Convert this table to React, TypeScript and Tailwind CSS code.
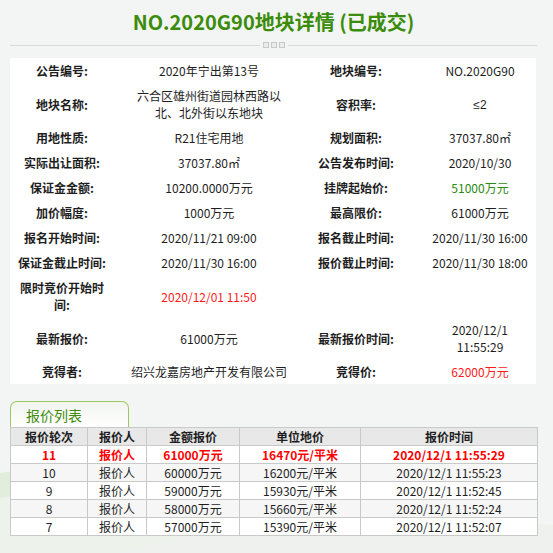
import React from 'react';

type Cell = { text: string; color?: string };
type InfoRow = [string, Cell, string, Cell];

const v = (text: string, color?: string): Cell => ({ text, color });

const info: InfoRow[] = [
  ['公告编号:', v('2020年宁出第13号'), '地块编号:', v('NO.2020G90')],
  ['地块名称:', v('六合区雄州街道园林西路以北、北外街以东地块'), '容积率:', v('≤2')],
  ['用地性质:', v('R21住宅用地'), '规划面积:', v('37037.80㎡')],
  ['实际出让面积:', v('37037.80㎡'), '公告发布时间:', v('2020/10/30')],
  ['保证金金额:', v('10200.0000万元'), '挂牌起始价:', v('51000万元', 'text-[#2b8a12]')],
  ['加价幅度:', v('1000万元'), '最高限价:', v('61000万元')],
  ['报名开始时间:', v('2020/11/21 09:00'), '报名截止时间:', v('2020/11/30 16:00')],
  ['保证金截止时间:', v('2020/11/30 16:00'), '报价截止时间:', v('2020/11/30 18:00')],
  ['限时竞价开始时间:', v('2020/12/01 11:50', 'text-[#ff1a1a]'), '', v('')],
  ['最新报价:', v('61000万元'), '最新报价时间:', v('2020/12/1 11:55:29')],
  ['竞得者:', v('绍兴龙嘉房地产开发有限公司'), '竞得价:', v('62000万元', 'text-[#ff1a1a]')],
];

const bids = [
  { round: '11', price: '61000万元', unit: '16470元/平米', time: '2020/12/1 11:55:29' },
  { round: '10', price: '60000万元', unit: '16200元/平米', time: '2020/12/1 11:55:23' },
  { round: '9', price: '59000万元', unit: '15930元/平米', time: '2020/12/1 11:52:45' },
  { round: '8', price: '58000万元', unit: '15660元/平米', time: '2020/12/1 11:52:24' },
  { round: '7', price: '57000万元', unit: '15390元/平米', time: '2020/12/1 11:52:07' },
];

const headers = ['报价轮次', '报价人', '金额报价', '单位地价', '报价时间'];

const App = () => {
  return (
    <div className="relative min-h-[553px] overflow-hidden bg-[#f3f5f4] font-['Noto_Sans_CJK_SC',sans-serif] text-[12px] text-[#1e1e1e]">
      {/* background swoosh */}
      <svg className="absolute bottom-0 left-0" width="553" height="90" viewBox="0 0 553 90">
        <path d="M0 10 C60 0 130 10 200 40 C260 65 330 80 420 90 L0 90 Z" fill="#e2eddb" />
        <path d="M0 35 C70 25 150 45 230 70 C270 82 300 88 330 90 L0 90 Z" fill="#edf3ea" />
        <path d="M120 90 C220 60 340 50 553 62 L553 90 Z" fill="#eef1ee" />
      </svg>

      <div className="relative ml-[10px] w-[527px]">
        <h1 className="pt-[8px] text-center text-[20px] font-bold leading-[28px] text-[#3b8c0b]">
          NO.2020G90地块详情 (已成交)
        </h1>

        {/* divider */}
        <div className="mt-[6px] flex h-[6px] items-center">
          <div className="h-px flex-1 bg-[#d8dad8]" />
          <div className="mx-[3px] flex gap-[2px]">
            <span className="h-[6px] w-[6px] border border-[#c8c8c8] bg-[#ececec]" />
            <span className="h-[6px] w-[6px] border border-[#c8c8c8] bg-[#ececec]" />
            <span className="h-[6px] w-[6px] border border-[#c8c8c8] bg-[#ececec]" />
          </div>
          <div className="h-px flex-1 bg-[#d8dad8]" />
        </div>

        {/* detail panel */}
        <div className="mt-[10px] w-[526px] bg-white">
          <table className="w-full table-fixed border-collapse leading-[17px]">
            <colgroup>
              <col className="w-[104px]" />
              <col className="w-[190px]" />
              <col className="w-[104px]" />
              <col className="w-[128px]" />
            </colgroup>
            <tbody>
              {info.map((row, i) => (
                <tr key={i}>
                  <td className="px-[7px] py-[4px] text-center font-bold">{row[0]}</td>
                  <td className={`px-[14px] py-[4px] text-center ${row[1].color ?? ''}`}>{row[1].text}</td>
                  <td className="px-[7px] py-[4px] text-center font-bold">{row[2]}</td>
                  <td className={`pl-[20px] pr-[4px] py-[4px] text-center ${row[3].color ?? ''}`}>
                    {row[3].text === '≤2' ? <span className="font-['Liberation_Sans',sans-serif]">≤2</span> : row[3].text}
                  </td>
                </tr>
              ))}
            </tbody>
          </table>
        </div>

        {/* bid list tab */}
        <div className="mt-[17px] flex h-[26px] w-[119px] items-center rounded-t-[7px] border border-b-0 border-[#9cc95f] bg-gradient-to-b from-[#f1f4ef] to-white pl-[15px] text-[14px] leading-[20px] text-[#3f8c0e]">
          报价列表
        </div>

        <table className="w-[527px] table-fixed border-collapse text-center leading-[17px]">
          <colgroup>
            <col className="w-[77px]" />
            <col className="w-[59px]" />
            <col className="w-[93px]" />
            <col className="w-[121px]" />
            <col className="w-[177px]" />
          </colgroup>
          <thead>
            <tr className="bg-[#e8e8e8]">
              {headers.map((h) => (
                <th key={h} className="border border-[#c9c9c9] font-bold">
                  {h}
                </th>
              ))}
            </tr>
          </thead>
          <tbody>
            {bids.map((b, i) => (
              <tr
                key={b.round}
                className={`${i === 0 ? 'font-bold text-[#ff0000]' : ''} ${i % 2 === 1 ? 'bg-[#f6f6f6]' : 'bg-white'}`}
              >
                <td className="border border-[#c9c9c9]">{b.round}</td>
                <td className="border border-[#c9c9c9]">报价人</td>
                <td className="border border-[#c9c9c9]">{b.price}</td>
                <td className="border border-[#c9c9c9]">{b.unit}</td>
                <td className="border border-[#c9c9c9]">{b.time}</td>
              </tr>
            ))}
          </tbody>
        </table>
      </div>
    </div>
  );
};

export default App;
